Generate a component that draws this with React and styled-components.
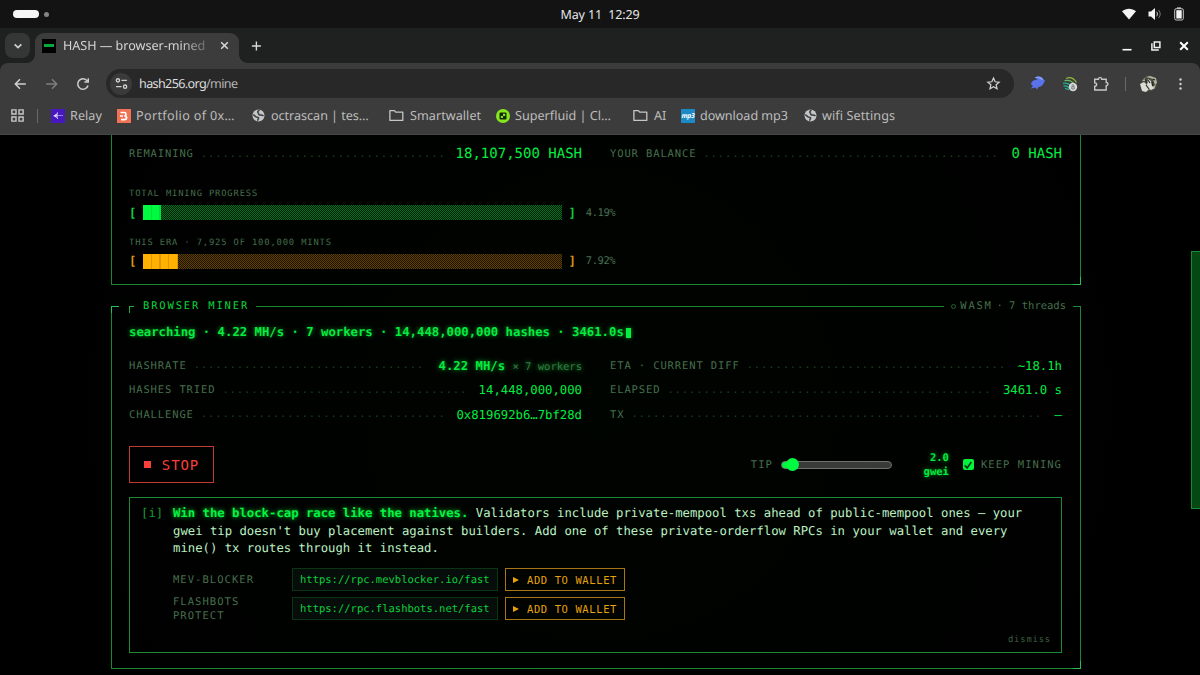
import React from 'react';
import styled, { createGlobalStyle, css } from 'styled-components';

const Theme = {
	green: '#04ec40',
	border: '#1a8832',
	label: '#466f4d',
	amber: '#e8a20a',
	red: '#f8403a',
	chrome: '#3c3c3c',
	mono: "'DejaVu Sans Mono', 'Liberation Mono', monospace",
	ui: "'Noto Sans', 'Open Sans', sans-serif",
};

const GlobalStyle = createGlobalStyle`
	* {
		box-sizing: border-box;
	}
	body {
		margin: 0;
		background: #000;
		overflow: hidden;
		text-rendering: geometricPrecision;
	}
`;

const Screen = styled.div`
	width: 1200px;
	height: 675px;
	display: flex;
	flex-flow: column;
	overflow: hidden;
	background: #000;
`;

/* ---------- desktop + browser chrome ---------- */

const SystemBar = styled.div`
	height: 28px;
	flex: none;
	display: grid;
	grid-template-columns: 1fr auto 1fr;
	align-items: center;
	background: #131313;
	font: 12.5px ${Theme.ui};
	color: #e4e4e4;
	padding: 0 16px 0 13px;
`;

const Workspaces = styled.div`
	display: flex;
	align-items: center;
	gap: 5px;
`;

const Pill = styled.span`
	width: ${props => (props.active ? 26 : 5)}px;
	height: ${props => (props.active ? 7.5 : 5)}px;
	border-radius: 4px;
	background: ${props => (props.active ? '#f6f6f6' : '#858585')};
`;

const Clock = styled.span`
	white-space: pre;
	letter-spacing: -0.13px;
	margin-left: 3px;
`;

const Indicators = styled.div`
	display: flex;
	justify-content: flex-end;
	align-items: center;
	gap: 12px;
`;

const TabStrip = styled.div`
	height: 35px;
	flex: none;
	display: flex;
	align-items: center;
	padding: 0 11px 0 5px;
	background: #1f2121;
`;

const TabSearch = styled.div`
	width: 25px;
	height: 25px;
	border-radius: 8px;
	background: #353737;
	display: flex;
	align-items: center;
	justify-content: center;
`;

const Tab = styled.div`
	position: relative;
	align-self: flex-end;
	width: 204px;
	height: 30px;
	margin-left: 5px;
	padding: 0 10px 5px 7px;
	display: flex;
	align-items: center;
	border-radius: 9px 9px 0 0;
	background: ${Theme.chrome};
	color: #d4d4d4;
	font: 12.6px ${Theme.ui};

	&::before,
	&::after {
		content: '';
		position: absolute;
		bottom: 0;
		width: 8px;
		height: 8px;
	}
	&::before {
		left: -8px;
		background: radial-gradient(circle at 0 0, transparent 7.5px, ${Theme.chrome} 8px);
	}
	&::after {
		right: -8px;
		background: radial-gradient(circle at 100% 0, transparent 7.5px, ${Theme.chrome} 8px);
	}
`;

const Favicon = styled.span`
	width: 14px;
	height: 14px;
	flex: none;
	background: #000;
	display: flex;
	align-items: center;
	justify-content: center;

	&::after {
		content: '';
		width: 10px;
		height: 3px;
		background: #08a838;
	}
`;

const TabTitle = styled.span`
	width: 146px;
	margin-left: 7px;
	white-space: nowrap;
	letter-spacing: -0.03px;
	mask-image: linear-gradient(90deg, #000 118px, rgba(0, 0, 0, 0.3) 143px);
`;

const WindowButtons = styled.div`
	margin-left: auto;
	display: flex;
	align-items: center;
	gap: 18.5px;
`;

const Toolbar = styled.div`
	height: 41px;
	flex: none;
	display: flex;
	align-items: center;
	padding: 0 13px 0 13px;
	background: ${Theme.chrome};
	border-radius: 8px 8px 0 0;
`;

const ToolbarWrap = styled.div`
	flex: none;
	background: #1f2121;
`;

const NavButtons = styled.div`
	display: flex;
	align-items: center;
	gap: 17.5px;
	width: 93px;
`;

const Omnibox = styled.div`
	width: 908px;
	height: 29.5px;
	border-radius: 15px;
	background: #282828;
	display: flex;
	align-items: center;
	padding: 0 13px 0 4px;
	font: 12.6px ${Theme.ui};
	color: #dedede;
`;

const SiteInfo = styled.div`
	width: 22px;
	height: 22px;
	border-radius: 50%;
	background: #3a3a3a;
	display: flex;
	align-items: center;
	justify-content: center;
	margin-right: 7px;
`;

const Url = styled.span`
	flex: 1;
	letter-spacing: -0.64px;

	span {
		color: #b4b4b4;
	}
`;

const Extensions = styled.div`
	flex: 1;
	display: flex;
	align-items: center;
	justify-content: space-between;
	padding-left: 16px;
`;

const Bookmarks = styled.div`
	height: 31px;
	flex: none;
	display: flex;
	align-items: center;
	padding: 0 0 7px 11px;
	background: ${Theme.chrome};
	border-bottom: 1px solid #464646;
	font: 12.6px ${Theme.ui};
	color: #bcbcbc;
`;

const Bookmark = styled.div`
	width: ${props => props.w}px;
	display: flex;
	align-items: center;
	gap: ${props => props.gap || 5}px;
	white-space: nowrap;
	letter-spacing: ${props => props.ls || 0}px;
	flex: none;

	svg {
		flex: none;
	}
`;

const Separator = styled.span`
	width: 1px;
	height: 14px;
	background: #696969;
	margin: ${props => props.m || '0'};
`;

const Mp3 = styled.span`
	width: 14px;
	height: 14px;
	flex: none;
	background: #1c88c4;
	color: #fff;
	font: italic bold 6.8px/13px ${Theme.ui};
	text-align: center;
	letter-spacing: -0.3px;
`;

/* ---------- page ---------- */

const Page = styled.main`
	flex: 1;
	min-height: 0;
	position: relative;
	padding-left: 111px;
	font-family: ${Theme.mono};
	color: ${Theme.green};
	background: radial-gradient(circle at 50% 50%, #000400 0%, #000200 55%, #000 80%);
`;

const ScrollThumb = styled.div`
	position: absolute;
	right: -1px;
	top: 116px;
	width: 10px;
	height: 258px;
	background: #044814;
	border: 1px solid #158c30;
`;

const Panel = styled.section`
	position: relative;
	width: 970px;
	height: ${props => props.h}px;
	padding: ${props => props.pt}px 18px 0 17px;
	margin-bottom: 21px;
	border: 1px solid ${Theme.border};
	${props =>
		props.open &&
		css`
			border-top: none;
		`};

	&::after {
		content: '';
		position: absolute;
		right: -1px;
		bottom: -1px;
		width: 7px;
		height: 7px;
		border: solid #28c04c;
		border-width: 0 1px 1px 0;
	}
`;

const Corner = styled.i`
	position: absolute;
	top: -1px;
	left: -1px;
	width: 8px;
	height: 7px;
	border: solid #28c04c;
	border-width: 1px 0 0 1px;
`;

const Legend = styled.div`
	position: absolute;
	top: -9px;
	${props => (props.right ? 'right: 7px;' : 'left: 7px;')}
	height: 16px;
	padding: 0 7px 0 ${props => (props.right ? 7 : 8)}px;
	display: flex;
	align-items: center;
	background: #000200;
	white-space: pre;
	font-size: 10.5px;
	letter-spacing: ${props => (props.right ? 0 : 1.84)}px;
	color: ${props => (props.right ? '#466f4d' : '#0cd43c')};
`;

const Tick = styled.i`
	width: 5px;
	height: 7px;
	margin: 7px 9px 0 2px;
	border: solid #1cac40;
	border-width: 1px 0 0 1px;
`;

const Spaced = styled.span`
	letter-spacing: 1.7px;
	margin-right: 4px;
`;

const Ring = styled.i`
	width: 5px;
	height: 5px;
	margin-right: 4px;
	border: 1px solid #23602f;
	border-radius: 50%;
`;

const Columns = styled.div`
	display: grid;
	grid-template-columns: 453px 452px;
	column-gap: 28px;
`;

const Row = styled.div`
	display: flex;
	align-items: center;
	height: 24.5px;
	white-space: pre;
`;

const Label = styled.span`
	font-size: 10.5px;
	line-height: 14px;
	letter-spacing: ${props => props.ls || 0.88}px;
	color: ${Theme.label};
`;

const Leader = styled.span`
	margin: 3px auto 0 7px;
	height: 14px;
	font-size: 10.5px;
	line-height: 11px;
	letter-spacing: 0.88px;
	color: #1b4022;
`;

const Value = styled.span`
	font-size: ${props => (props.big ? 14 : 12.27)}px;
	font-weight: ${props => (props.bold ? 'bold' : 'normal')};
	${props =>
		props.glow &&
		css`
			text-shadow: 0 0 5px rgba(0, 255, 65, 0.7);
		`};

	small {
		font-size: 10.5px;
		font-weight: normal;
		color: #3a7d47;
	}
`;

const Progress = styled.div`
	height: 48.5px;
	color: ${props => props.tone};
`;

const ProgressLabel = styled.div`
	font-size: 8.76px;
	line-height: 14px;
	letter-spacing: 0.88px;
	color: ${Theme.label};
`;

const Bar = styled.div`
	display: flex;
	align-items: center;
	height: 18px;
	margin-top: 2.5px;
	font-size: 12.3px;
	font-weight: bold;

	small {
		margin-left: 10px;
		font-size: 10.5px;
		font-weight: normal;
		letter-spacing: -0.45px;
		color: #4a7052;
	}
`;

const Track = styled.div`
	width: 419px;
	height: 15px;
	margin: 0 6px 0 7px;
	background: repeating-conic-gradient(${props => props.dark} 0 25%, ${props => props.light} 0 50%) 0 0 / 2px 2px;
`;

const Fill = styled.div`
	height: 15px;
	background: repeating-linear-gradient(90deg, ${props => props.fill} 0 7.7px, ${props => props.seam} 7.7px 8.75px);
`;

const Status = styled.div`
	display: flex;
	align-items: center;
	height: 18px;
	margin-bottom: 12.5px;
	font-size: 12.27px;
	font-weight: bold;
	white-space: pre;
	text-shadow: 0 0 5px rgba(0, 255, 65, 0.6);
`;

const Cursor = styled.span`
	width: 5px;
	height: 10px;
	margin: 2px 0 0 2px;
	background: #04f040;
	box-shadow: 0 0 4px rgba(0, 255, 65, 0.6);
`;

const Controls = styled.div`
	display: flex;
	align-items: center;
	height: 37px;
	margin: 19px 0 14px;
`;

const StopButton = styled.button`
	width: 85px;
	height: 37px;
	padding: 0;
	display: flex;
	align-items: center;
	justify-content: center;
	gap: 11px;
	background: none;
	border: 1px solid #c03a34;
	color: ${Theme.red};
	font: 14px ${Theme.mono};
	letter-spacing: 0.9px;

	&::before {
		content: '';
		width: 7px;
		height: 7px;
		background: ${Theme.red};
	}
`;

const Slider = styled.div`
	width: 111px;
	height: 8px;
	margin: 0 0 0 8px;
	display: flex;
	align-items: center;
	border: 1px solid #717171;
	border-radius: 4px;
	background: linear-gradient(90deg, #00f43e 12px, #3a3a3a 12px);
	box-shadow: inset 1px 0 0 #00f43e;

	&::before {
		content: '';
		width: 13px;
		height: 13px;
		margin-left: 4px;
		flex: none;
		border-radius: 50%;
		background: #00fc40;
	}
`;

const Gwei = styled.div`
	width: 57px;
	text-align: right;
	font-size: 10.5px;
	font-weight: bold;
	line-height: 14px;
	text-shadow: 0 0 5px rgba(0, 255, 65, 0.6);
`;

const Checkbox = styled.span`
	width: 11px;
	height: 11px;
	margin: 0 7px 0 14px;
	border-radius: 2px;
	background: #00f43e;
	display: flex;
	align-items: center;
	justify-content: center;
`;

const Notice = styled.div`
	width: 933px;
	height: 156px;
	padding: 7px 11px 0;
	display: grid;
	grid-template-columns: 32px 1fr;
	align-content: start;
	border: 1px solid #1f8a36;
	font-size: 12.27px;
	line-height: 17.6px;
`;

const Info = styled.span`
	color: #1a9a36;
`;

const Copy = styled.div`
	color: #bcf0c3;
	white-space: pre;

	b {
		color: #05f442;
		text-shadow: 0 0 5px rgba(0, 255, 65, 0.8);
	}
`;

const RpcRow = styled.div`
	display: grid;
	grid-template-columns: 119px 206px 120px;
	grid-template-rows: 23px;
	align-items: center;
	height: 23px;
	margin-bottom: 6px;
`;

const RpcList = styled.div`
	grid-column: 2;
	margin-top: 10.5px;
`;

const Code = styled.code`
	height: 23px;
	padding-left: 7px;
	border: 1px solid #0a3413;
	background: #070d0a;
	font: 10.5px/22px ${Theme.mono};
	color: #0cd03c;
`;

const WalletButton = styled.button`
	height: 23px;
	width: 120px;
	margin-left: 7px;
	padding: 0 0 0 7px;
	display: flex;
	align-items: center;
	gap: 8px;
	background: none;
	border: 1px solid #a87614;
	color: ${Theme.amber};
	font: 10.5px ${Theme.mono};
	letter-spacing: 0.6px;
	white-space: nowrap;
`;

const Dismiss = styled.div`
	grid-column: 2;
	justify-self: end;
	margin-top: 7px;
	margin-right: -1px;
	font-size: 8.76px;
	line-height: 14px;
	letter-spacing: 0.88px;
	color: #3f6045;
`;

const Globe = () => (
	<svg width="13" height="13" viewBox="0 0 13 13">
		<circle cx="6.5" cy="6.5" r="6" fill="#c4c7c8" />
		<path
			d="M7.600 1.300C6 1.800 5.200 3 6.200 3.900c.8.6.2 1.300 1 1.900 1.200.5 2.600-.1 4.300 1M1.300 5.600l2.700 2.200c1.100.7 2.300.1 2.600 1.200.1 1-.9 1.300-.9 2.700"
			fill="none"
			stroke={Theme.chrome}
			strokeWidth="1.5"
		/>
	</svg>
);

const Folder = () => (
	<svg width="15" height="13" viewBox="0 0 15 13" fill="none" stroke="#c4c7c8" strokeWidth="1.3">
		<path d="M.9 1.600h4.500l1.500 1.600h6.900v8.200H.9z" strokeLinejoin="round" />
	</svg>
);

const Relay = () => (
	<svg width="14" height="14" viewBox="0 0 14 14">
		<rect width="14" height="14" fill="#4519bd" />
		<path d="M6 6.500h6M3.500 6.500l3-2.500M3.500 6.500l3.500 3.500M2.500 7h3M6.500 3v7" stroke="#d9cdf6" strokeWidth=".7" opacity=".85" fill="none" />
		<path d="M2.500 6.800l3.500-2-.5 4z" fill="#e4daf8" />
	</svg>
);

const Portfolio = () => (
	<svg width="14" height="14" viewBox="0 0 14 14">
		<rect width="14" height="14" fill="#ef7254" />
		<path d="M3.500 3.500h3.800c2.200 0 2.200 3 .2 3.400 2.800.2 2.800 3.700-.2 3.700H4M3 7h3" fill="none" stroke="#fff" strokeWidth="1.7" />
	</svg>
);

const Superfluid = () => (
	<svg width="14" height="14" viewBox="0 0 14 14">
		<circle cx="7" cy="7" r="7" fill="#84e81c" />
		<rect x="3.500" y="3.500" width="7" height="7" rx="1" fill="#142808" />
		<path d="M7 4.800h2.200V7H7zM4.900 7.100H7v2H4.900z" fill="#84e81c" />
	</svg>
);

const Icon = ({ s = 12, d, color = '#d0d0d0', w = 1.4 }) => (
	<svg width={s} height={s} viewBox="0 0 12 12" fill="none" stroke={color} strokeWidth={w}>
		<path d={d} />
	</svg>
);

const Stat = ({ label, value, dots, children, ...rest }) => (
	<Row>
		<Label>{label}</Label>
		<Leader>{'.'.repeat(dots)}</Leader>
		<Value {...rest}>{children || value}</Value>
	</Row>
);

const bars = [
	{ label: 'TOTAL MINING PROGRESS', pct: '4.19%', cells: 2, tone: '#10cc3e', fill: '#00fa40', seam: '#00e43a', dark: '#001c06', light: '#00701c' },
	{ label: 'THIS ERA · 7,925 OF 100,000 MINTS', pct: '7.92%', cells: 4, tone: '#d89410', fill: '#ffb000', seam: '#de9900', dark: '#1a1100', light: '#604100' },
];

const rpcs = [
	{ name: 'MEV-BLOCKER', url: 'https://rpc.mevblocker.io/fast' },
	{ name: 'FLASHBOTS\nPROTECT', url: 'https://rpc.flashbots.net/fast' },
];

const Chrome = () => (
	<>
		<SystemBar>
			<Workspaces>
				<Pill active />
				<Pill />
			</Workspaces>
			<Clock>{'May 11  12:29'}</Clock>
			<Indicators>
				<svg width="14" height="12" viewBox="0 0 14 12">
					<path d="M0 3.200C4-.2 10-.2 14 3.200L7 11.500z" fill="#f4f4f4" />
				</svg>
				<svg width="14" height="14" viewBox="0 0 14 14" fill="none">
					<path d="M.5 4.500h2.500L7 1v12L3 9.500H.5z" fill="#f4f4f4" />
					<path d="M8.500 4.700c1.200 1.400 1.200 3.200 0 4.600" stroke="#d0d0d0" />
					<path d="M10.500 3c2.200 2.400 2.200 5.600 0 8" stroke="#777" />
				</svg>
				<svg width="10" height="14" viewBox="0 0 10 14">
					<path d="M3 .5h4v1.200H3z" fill="#f4f4f4" />
					<rect x=".7" y="1.700" width="8.600" height="11.300" rx="1.500" fill="none" stroke="#c8c8c8" />
					<rect x="2.300" y="3.200" width="5.400" height="8.300" fill="#f4f4f4" />
				</svg>
			</Indicators>
		</SystemBar>
		<TabStrip>
			<TabSearch>
				<Icon s={10} w={2} d="M2 4l4 4 4-4" />
			</TabSearch>
			<Tab>
				<Favicon />
				<TabTitle>HASH — browser-mined</TabTitle>
				<svg width="9" height="9" viewBox="0 0 9 9" stroke="#d8d8d8" strokeWidth="1.500" style={{ marginLeft: 'auto' }}>
					<path d="M1.200 1.200l6.600 6.600M7.800 1.200L1.200 7.800" />
				</svg>
			</Tab>
			<svg width="36" height="12" viewBox="0 0 36 12" stroke="#d8d8d8" strokeWidth="1.400">
				<path d="M17.400 1.500v9M12.900 6h9" />
			</svg>
			<WindowButtons>
				<svg width="10" height="12" viewBox="0 0 10 12">
					<path d="M.5 9.700h9" stroke="#fff" strokeWidth="1.600" />
				</svg>
				<svg width="10" height="10" viewBox="0 0 10 10" fill="none" stroke="#f0f0f0" strokeWidth="1.500">
					<path d="M3.300.9h5.600v5.600H3.300zM.9 2.200v6.900h6.900" />
				</svg>
				<svg width="10" height="10" viewBox="0 0 10 10" stroke="#fff" strokeWidth="2">
					<path d="M1.200 1.200l7.600 7.600M8.800 1.200L1.200 8.800" />
				</svg>
			</WindowButtons>
		</TabStrip>
		<ToolbarWrap>
			<Toolbar>
				<NavButtons>
					<Icon s={14} w={1.3} d="M11 6H2M6 2L2 6l4 4" />
					<Icon s={14} w={1.3} color="#7e7e7e" d="M1 6h9M6 2l4 4-4 4" />
					<Icon s={14} w={1.3} d="M10.300 7.300A4.500 4.500 0 1 1 9.600 3.300M10.500 1v3.300H7.200" />
				</NavButtons>
				<Omnibox>
					<SiteInfo>
						<Icon s={13} w={1.2} d="M2.700 4.600a1.500 1.500 0 1 0 0-3 1.500 1.500 0 0 0 0 3zM6 3.100h5M9.300 10.400a1.500 1.500 0 1 0 0-3 1.500 1.500 0 0 0 0 3zM1 8.900h5" />
					</SiteInfo>
					<Url>
						hash256.org<span>/mine</span>
					</Url>
					<Icon s={15} w={1} d="M6 1.600l1.300 3 3.200.3-2.400 2.100.7 3.200L6 8.500l-2.800 1.700.7-3.200L1.500 4.900l3.200-.3z" />
				</Omnibox>
				<Extensions>
					<svg width="16" height="15" viewBox="0 0 16 15">
						<path d="M4.500 1.500C8-.3 12 .5 13.500 3.500l1.500 1-1.500 3c-1 2.500-3 3.300-5 3.500L7 13.500 5.500 11.500.8 12.500 3 10 1.200 8.500C1 5 4 4 7.500 3.500z" fill="#5a72ea" />
						<path d="M4.500 1.500C8-.3 12 .5 13.500 3.500l-2 .5C9.500 2.200 7 1.800 4.500 1.500z" fill="#7f9cf6" />
					</svg>
					<svg width="16" height="16" viewBox="0 0 16 16" fill="none" strokeWidth="1.300">
						<path d="M4 2.500c4-1.800 8 0 10.500 4" stroke="#90b83c" />
						<path d="M2.500 4.700c4-1 8 .5 10 4" stroke="#65b866" />
						<path d="M1 7.300c4-.5 7 1 8.500 4M1.500 10c3-.3 5 .8 6.500 3M3 12.700c2-.2 3 .3 4 1.500" stroke="#22ac91" />
						<circle cx="11" cy="11" r="4.200" fill="#d7d9d8" />
						<path d="M9.800 10.700h2.400v2.300H9.800zM10.200 10.500V9.300c.2-1 1.400-1 1.600 0v1.200" stroke="#777" strokeWidth=".9" />
					</svg>
					<svg width="16" height="16" viewBox="0 0 16 16" fill="none" stroke="#c6c6c6" strokeWidth="1.400">
						<path d="M1.700 3.200h3.800c0-2.400 3.200-2.400 3.200 0h4.500v3.300c2.400 0 2.400 3.200 0 3.200v4.300H1.700v-3.700c2.600 0 2.600-3.400 0-3.400z" />
					</svg>
					<Separator m="0 -1px 0 0" />
					<svg width="18" height="17" viewBox="0 0 18 17">
						<circle cx="9" cy="8.500" r="8" fill="#4a4c44" />
						<path d="M0 9l4-2 3 3 1-6 3 2 1 5 3 2-4 2-2-1-3 3-4-1z" fill="#dddcd4" />
						<path d="M6 2l4-1 6 2 1 5-2 2-2-6-3-1zM2 6l3-3 1 3zM13 11l3-1-2 4z" fill="#b4b29a" />
						<path d="M8 5l2 3M12 7l1 4M6 10l3 4M5 4l2 4M13 4l2 1" stroke="#242722" strokeWidth="1.200" />
					</svg>
					<svg width="13" height="14" viewBox="0 0 13 14" fill="#d0d0d0">
						<circle cx="6.500" cy="2.500" r="1.200" />
						<circle cx="6.500" cy="7" r="1.200" />
						<circle cx="6.500" cy="11.500" r="1.200" />
					</svg>
				</Extensions>
			</Toolbar>
		</ToolbarWrap>
		<Bookmarks>
			<svg width="13" height="13" viewBox="0 0 13 13" fill="none" stroke="#c8c8c8" strokeWidth="1.400">
				<path d="M.9.9h4.100V5H.9zM8 .9h4.100V5H8zM.9 8H5v4.100H.9zM8 8h4.100v4.100H8z" />
			</svg>
			<Separator m="0 13px 0 13px" />
			<Bookmark w={66} ls={0.05}><Relay />Relay</Bookmark>
			<Bookmark w={135} ls={0.34}><Portfolio />Portfolio of 0x…</Bookmark>
			<Bookmark w={137} gap={6} ls={-0.03}><Globe />octrascan | tes…</Bookmark>
			<Bookmark w={107} gap={6} ls={0.05}><Folder />Smartwallet</Bookmark>
			<Bookmark w={137} ls={0.02}><Superfluid />Superfluid | Cl…</Bookmark>
			<Bookmark w={48} gap={6} ls={-0.1}><Folder />AI</Bookmark>
			<Bookmark w={123} ls={-0.05}><Mp3>mp3</Mp3>download mp3</Bookmark>
			<Bookmark w={100} ls={0.1}><Globe />wifi Settings</Bookmark>
		</Bookmarks>
	</>
);

const App = () => (
	<Screen>
		<GlobalStyle />
		<Chrome />
		<Page>
			<Panel open h={150} pt={7}>
				<Columns>
					<Stat label="REMAINING" value="18,107,500 HASH" dots={34} big />
					<Stat label="YOUR BALANCE" value="0 HASH" dots={41} big />
				</Columns>
				<div style={{ height: 20.5 }} />
				{bars.map(bar => (
					<Progress key={bar.label} tone={bar.tone}>
						<ProgressLabel>{bar.label}</ProgressLabel>
						<Bar>
							[
							<Track dark={bar.dark} light={bar.light}>
								<Fill fill={bar.fill} seam={bar.seam} style={{ width: bar.cells * 8.75 }} />
							</Track>
							]<small>{bar.pct}</small>
						</Bar>
					</Progress>
				))}
			</Panel>

			<Panel h={363} pt={16}>
				<Corner />
				<Legend>
					<Tick />
					BROWSER MINER
				</Legend>
				<Legend right>
					<Ring />
					<Spaced>WASM</Spaced>· 7 threads
				</Legend>
				<Status>
					searching · 4.22 MH/s · 7 workers · 14,448,000,000 hashes · 3461.0s
					<Cursor />
				</Status>
				<Columns>
					<Stat label="HASHRATE" dots={32} bold glow>
						4.22 MH/s <small>× 7 workers</small>
					</Stat>
					<Stat label="ETA · CURRENT DIFF" value="~18.1h" dots={36} />
					<Stat label="HASHES TRIED" value="14,448,000,000" dots={34} />
					<Stat label="ELAPSED" value="3461.0 s" dots={45} />
					<Stat label="CHALLENGE" value="0x819692b6…7bf28d" dots={34} />
					<Stat label="TX" value="—" dots={57} />
				</Columns>
				<Controls>
					<StopButton>STOP</StopButton>
					<Label ls={1.05} style={{ marginLeft: 'auto' }}>TIP</Label>
					<Slider />
					<Gwei>
						2.0
						<br />
						gwei
					</Gwei>
					<Checkbox>
						<Icon s={10} w={2} color="#04380f" d="M2 6.500l3 3 5-7" />
					</Checkbox>
					<Label ls={1.05}>KEEP MINING</Label>
				</Controls>
				<Notice>
					<Info>[i]</Info>
					<Copy>
						<b>Win the block-cap race like the natives.</b>
						{' Validators include private-mempool txs ahead of public-mempool ones — your\n'}
						{"gwei tip doesn't buy placement against builders. Add one of these private-orderflow RPCs in your wallet and every\n"}
						mine() tx routes through it instead.
					</Copy>
					<RpcList>
						{rpcs.map(rpc => (
							<RpcRow key={rpc.name}>
								<Label ls={1.05} style={{ whiteSpace: 'pre' }}>{rpc.name}</Label>
								<Code>{rpc.url}</Code>
								<WalletButton>
									<svg width="6" height="6" viewBox="0 0 6 6">
										<path d="M0 0l6 3-6 3z" fill={Theme.amber} />
									</svg>
									ADD TO WALLET
								</WalletButton>
							</RpcRow>
						))}
					</RpcList>
					<Dismiss>dismiss</Dismiss>
				</Notice>
			</Panel>
			<ScrollThumb />
		</Page>
	</Screen>
);

export default App;
